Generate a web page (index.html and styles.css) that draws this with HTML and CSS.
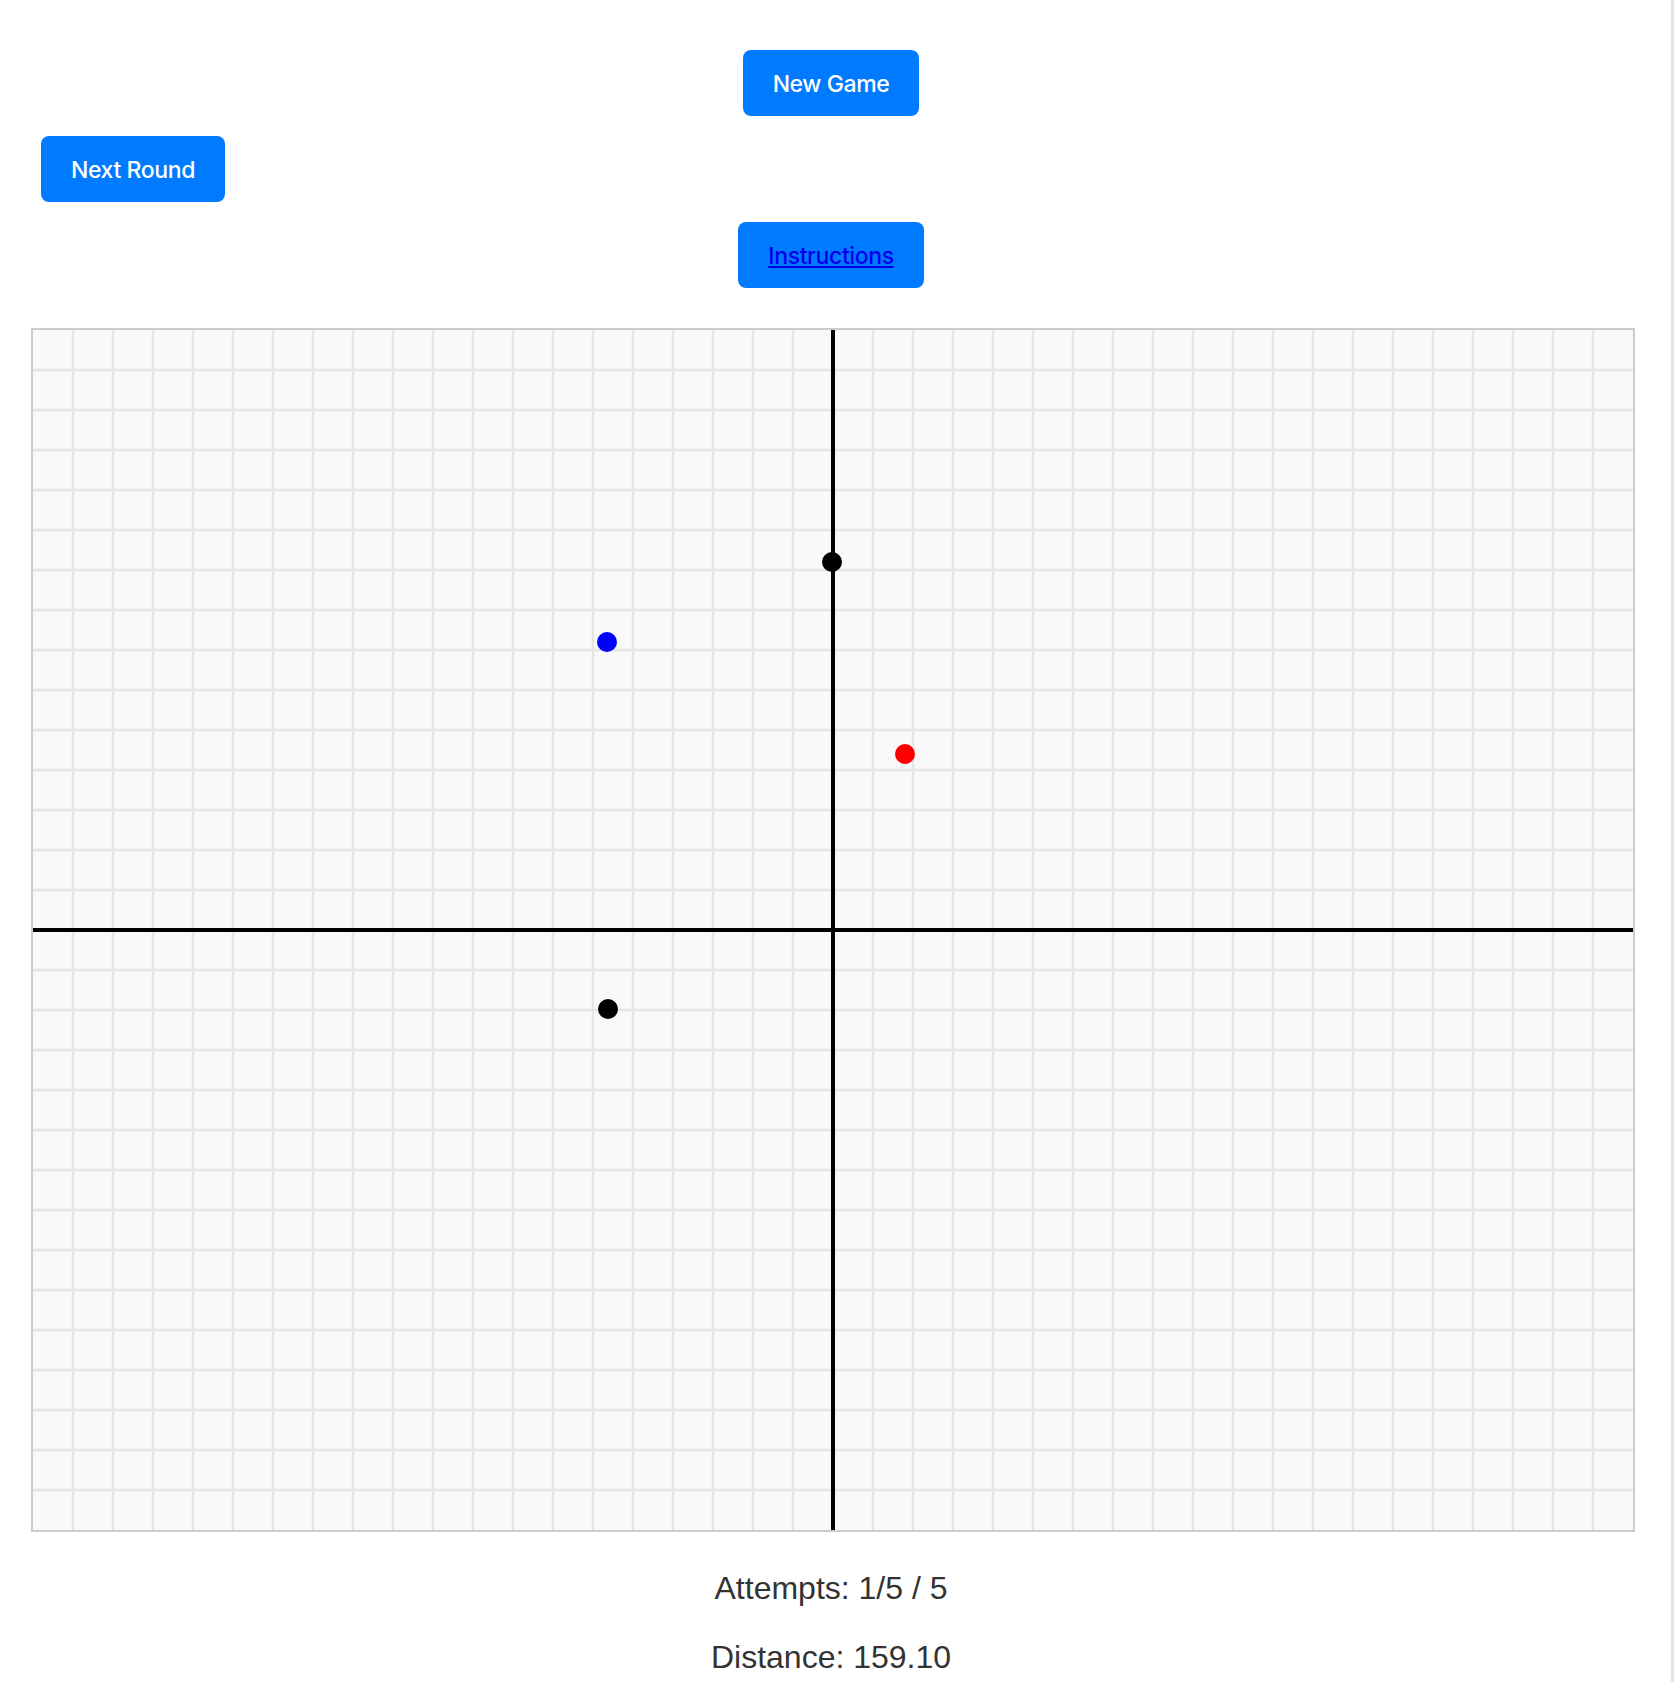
FILE: index.html
```html
<!DOCTYPE html>
<html>
<head>
<meta charset="utf-8">
<title>Guess the Point</title>
<link rel="stylesheet" href="styles.css">
</head>
<body>
<div class="page">
  <button class="btn btn-new">New Game</button>
  <button class="btn btn-next">Next Round</button>
  <button class="btn btn-instr"><a href="#" class="instr-link">Instructions</a></button>
  <div class="board">
    <svg class="plane" width="1600" height="1200" viewBox="0 0 1600 1200" xmlns="http://www.w3.org/2000/svg">
      <g id="grid" stroke="#e5e5e5" stroke-width="2.5"></g>
      <line x1="800" y1="0" x2="800" y2="1200" stroke="#000" stroke-width="4"/>
      <line x1="0" y1="600" x2="1600" y2="600" stroke="#000" stroke-width="4"/>
      <circle cx="799" cy="232" r="10" fill="#000"/>
      <circle cx="574" cy="312" r="10" fill="#0000ff"/>
      <circle cx="872" cy="424" r="10" fill="#ff0000"/>
      <circle cx="575" cy="679" r="10" fill="#000"/>
    </svg>
  </div>
  <p class="stat">Attempts: 1/5 / 5</p>
  <p class="stat">Distance: 159.10</p>
</div>
<script>
  (function () {
    var g = document.getElementById('grid');
    var ns = 'http://www.w3.org/2000/svg';
    for (var x = 40; x < 1600; x += 40) {
      var l = document.createElementNS(ns, 'line');
      l.setAttribute('x1', x); l.setAttribute('x2', x);
      l.setAttribute('y1', 0); l.setAttribute('y2', 1200);
      g.appendChild(l);
    }
    for (var y = 40; y < 1200; y += 40) {
      var h = document.createElementNS(ns, 'line');
      h.setAttribute('y1', y); h.setAttribute('y2', y);
      h.setAttribute('x1', 0); h.setAttribute('x2', 1600);
      g.appendChild(h);
    }
  })();
</script>
</body>
</html>
```

FILE: styles.css
```css
html, body {
  margin: 0;
  padding: 0;
  background: #ffffff;
}

body {
  width: 1674px;
  min-height: 1682px;
  box-sizing: border-box;
  border-right: 3px solid #e3e3e3;
  font-family: "Liberation Sans", Arial, sans-serif;
}

.page {
  width: 1662px;
  display: flex;
  flex-direction: column;
  align-items: center;
  padding-top: 50px;
}

.btn {
  height: 66px;
  padding: 2px 30px 0;
  border: none;
  border-radius: 8px;
  background: #007bff;
  color: #ffffff;
  font-family: Inter, "Noto Sans", sans-serif;
  font-size: 23px;
  font-weight: 500;
  letter-spacing: -0.4px;
  cursor: pointer;
}

.btn-next {
  align-self: flex-start;
  margin-left: 41px;
  margin-top: 20px;
}

.btn-instr {
  margin-top: 20px;
}

.instr-link {
  color: #0000ee;
  text-decoration: underline;
}

.board {
  align-self: flex-start;
  margin-left: 31px;
  margin-top: 40px;
  border: 2px solid #cccccc;
  background: #f9f9f9;
  width: 1600px;
  height: 1200px;
}

.plane {
  display: block;
}

.stat {
  margin: 32px 0 0;
  font-size: 32px;
  color: #333333;
  text-align: center;
}

.stat:first-of-type {
  margin-top: 38px;
}
```
